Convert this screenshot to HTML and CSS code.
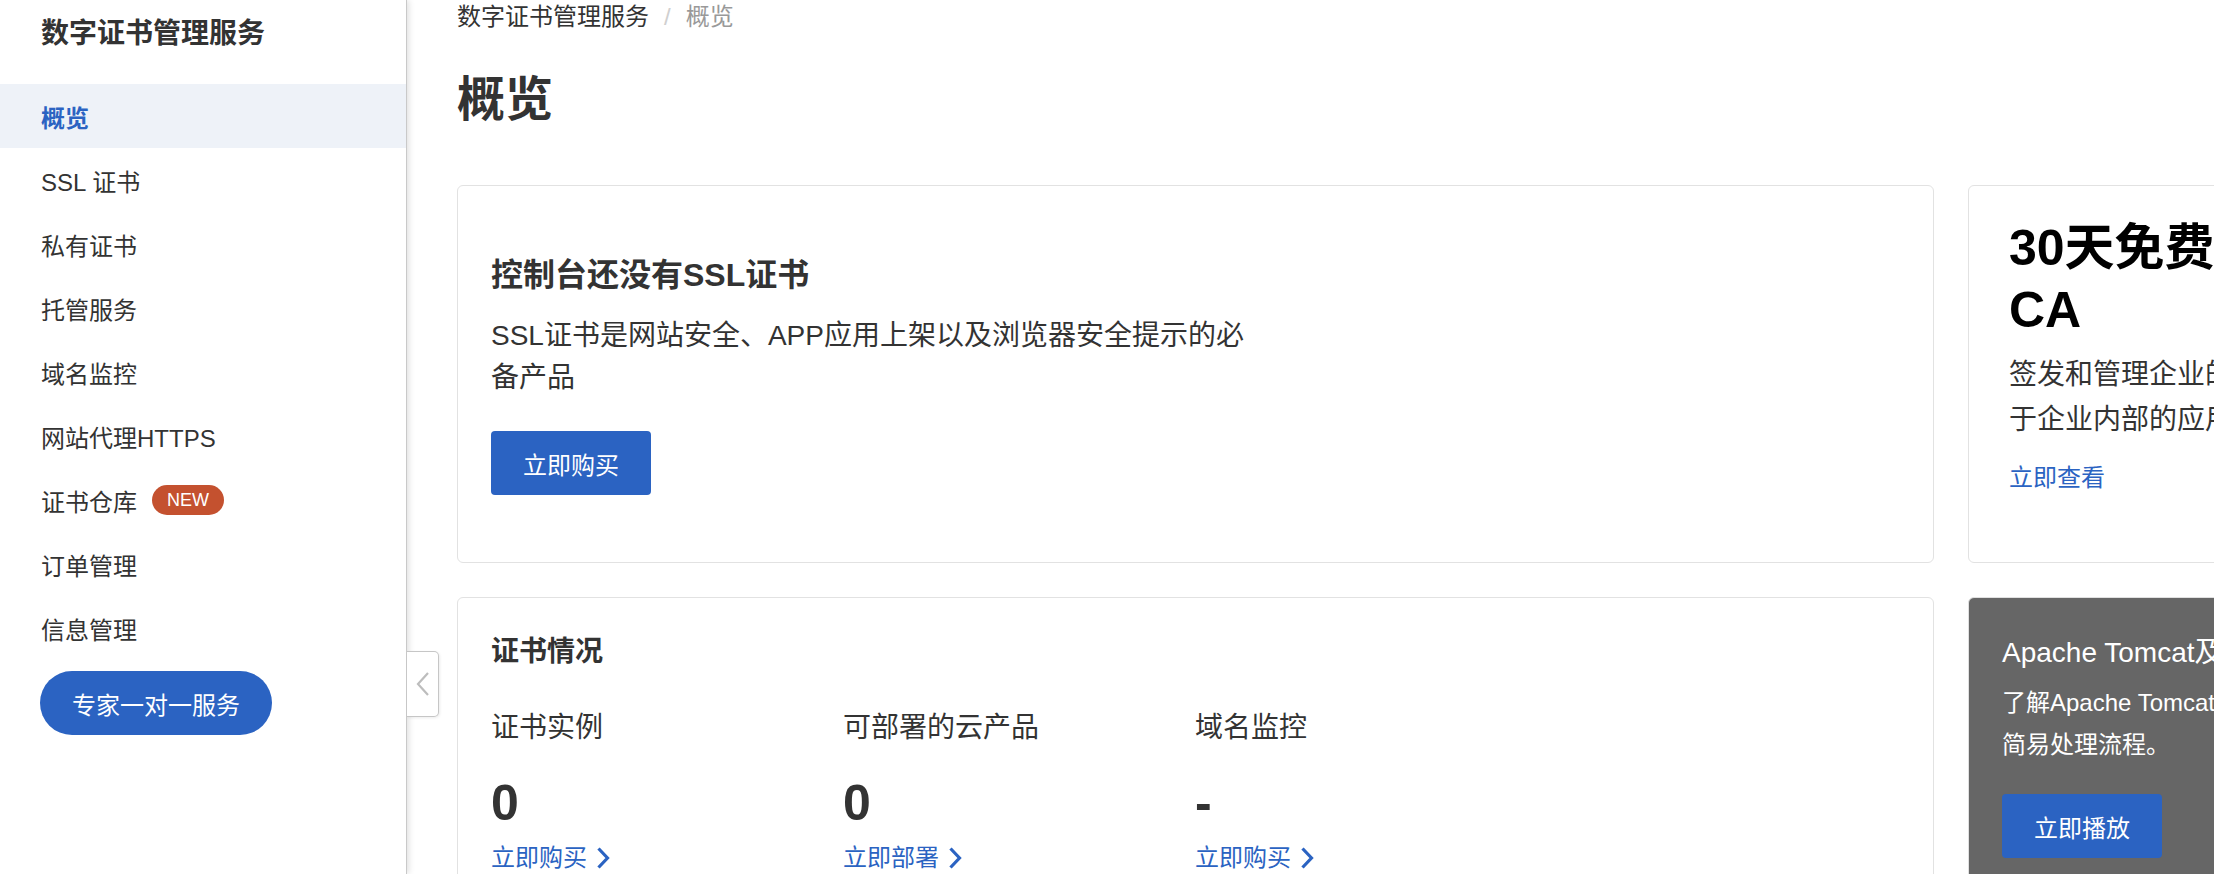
FILE: index.html
```html
<!DOCTYPE html>
<html lang="zh-CN">
<head>
<meta charset="utf-8">
<title>数字证书管理服务 - 概览</title>
<link rel="stylesheet" href="styles.css">
</head>
<body>
<div class="app">
  <aside class="sidebar">
    <div class="sidebar-title">数字证书管理服务</div>
    <nav class="menu">
      <div class="menu-item active">概览</div>
      <div class="menu-item">SSL 证书</div>
      <div class="menu-item">私有证书</div>
      <div class="menu-item">托管服务</div>
      <div class="menu-item">域名监控</div>
      <div class="menu-item">网站代理HTTPS</div>
      <div class="menu-item">证书仓库<span class="badge">NEW</span></div>
      <div class="menu-item">订单管理</div>
      <div class="menu-item">信息管理</div>
    </nav>
    <button class="expert-btn">专家一对一服务</button>
    <div class="collapse-handle">
      <svg width="14" height="26" viewBox="0 0 14 26"><path d="M12 2 L2 13 L12 24" fill="none" stroke="#bdbdbd" stroke-width="2.2"/></svg>
    </div>
  </aside>
  <main class="main">
    <div class="breadcrumb"><span class="crumb">数字证书管理服务</span><span class="sep">/</span><span class="crumb-current">概览</span></div>
    <h1 class="page-title">概览</h1>
    <div class="grid">
      <section class="card card-empty">
        <div class="empty-title">控制台还没有SSL证书</div>
        <div class="empty-desc">SSL证书是网站安全、APP应用上架以及浏览器安全提示的必<br>备产品</div>
        <button class="primary-btn">立即购买</button>
      </section>
      <section class="card card-promo">
        <div class="promo-title">30天免费试用私有<br>CA</div>
        <div class="promo-desc">签发和管理企业的私有证书，适用<br>于企业内部的应用场景</div>
        <a class="promo-link">立即查看</a>
      </section>
      <section class="card card-stats">
        <div class="stats-title">证书情况</div>
        <div class="stats">
          <div class="stat">
            <div class="stat-label">证书实例</div>
            <div class="stat-value">0</div>
            <a class="stat-link">立即购买<svg class="chev" width="14" height="22" viewBox="0 0 14 22"><path d="M2.5 1.5 L11.5 11 L2.5 20.5" fill="none" stroke="#2b63c2" stroke-width="3.2"/></svg></a>
          </div>
          <div class="stat">
            <div class="stat-label">可部署的云产品</div>
            <div class="stat-value">0</div>
            <a class="stat-link">立即部署<svg class="chev" width="14" height="22" viewBox="0 0 14 22"><path d="M2.5 1.5 L11.5 11 L2.5 20.5" fill="none" stroke="#2b63c2" stroke-width="3.2"/></svg></a>
          </div>
          <div class="stat">
            <div class="stat-label">域名监控</div>
            <div class="stat-value">-</div>
            <a class="stat-link">立即购买<svg class="chev" width="14" height="22" viewBox="0 0 14 22"><path d="M2.5 1.5 L11.5 11 L2.5 20.5" fill="none" stroke="#2b63c2" stroke-width="3.2"/></svg></a>
          </div>
        </div>
      </section>
      <section class="card card-video">
        <div class="video-title">Apache Tomcat及Nginx服务器SSL证书部署</div>
        <div class="video-desc">了解Apache Tomcat服务器SSL证书安装的<br>简易处理流程。</div>
        <button class="primary-btn video-btn">立即播放</button>
      </section>
    </div>
  </main>
</div>
</body>
</html>
```

FILE: styles.css
```css
html, body {
  margin: 0;
  padding: 0;
  height: 874px;
  overflow: hidden;
  background: #fff;
}
body {
  font-family: "Liberation Sans", "Noto Sans CJK SC", sans-serif;
  color: #333;
}
.app {
  display: flex;
  height: 874px;
  width: 2214px;
  overflow: hidden;
}
.sidebar {
  flex: none;
  width: 406px;
  border-right: 1px solid #c9c9c9;
  box-shadow: 2px 0 6px rgba(0, 0, 0, 0.12);
  position: relative;
  z-index: 2;
  background: #fff;
}
.sidebar-title {
  padding-left: 41px;
  height: 68px;
  line-height: 68px;
  font-size: 28px;
  font-weight: 700;
  color: #333;
  margin-bottom: 16px;
}
.menu-item {
  display: flex;
  align-items: center;
  height: 64px;
  padding-left: 41px;
  font-size: 24px;
  color: #333;
}
.menu-item.active {
  background: #eef2f8;
  color: #2b63c2;
  font-weight: 600;
}
.badge {
  display: inline-block;
  margin-left: 15px;
  width: 72px;
  height: 30px;
  line-height: 30px;
  border-radius: 15px;
  background: #c4512f;
  color: #fff;
  font-size: 18px;
  font-weight: 400;
  text-align: center;
}
.expert-btn {
  display: block;
  margin: 11px 0 0 40px;
  width: 232px;
  height: 64px;
  border: none;
  border-radius: 32px;
  background: #2b63c2;
  color: #fff;
  font-family: inherit;
  font-size: 24px;
  padding: 0;
}
.collapse-handle {
  position: absolute;
  left: 100%;
  top: 651px;
  width: 31px;
  height: 64px;
  margin-left: 1px;
  border: 1px solid #c6c6c6;
  border-left: none;
  border-radius: 0 5px 5px 0;
  background: #fff;
  box-shadow: 1px 1px 3px rgba(0, 0, 0, 0.08);
  display: flex;
  align-items: center;
  justify-content: center;
}
.main {
  flex: none;
  padding-left: 50px;
}
.breadcrumb {
  height: 34px;
  line-height: 34px;
  font-size: 24px;
  white-space: nowrap;
}
.crumb { color: #333; }
.sep { color: #d0d0d0; margin: 0 15px; }
.crumb-current { color: #999; }
.page-title {
  margin: 34px 0 53px;
  height: 64px;
  line-height: 64px;
  font-size: 48px;
  font-weight: 700;
  color: #333;
}
.grid {
  display: grid;
  grid-template-columns: 1477px 500px;
  grid-template-rows: 378px auto;
  gap: 34px;
}
.card {
  box-sizing: border-box;
  border: 1px solid #e2e2e2;
  border-radius: 6px;
  background: #fff;
  overflow: hidden;
}
.card-empty {
  display: flex;
  flex-direction: column;
  justify-content: center;
  align-items: flex-start;
  padding: 0 33px;
}
.empty-title {
  font-size: 32px;
  font-weight: 700;
  line-height: 44px;
  color: #333;
}
.empty-desc {
  margin-top: 18px;
  font-size: 28px;
  line-height: 42px;
  color: #333;
  white-space: nowrap;
}
.primary-btn {
  margin-top: 32px;
  width: 160px;
  height: 64px;
  border: none;
  border-radius: 4px;
  background: #2b63c2;
  color: #fff;
  font-family: inherit;
  font-size: 24px;
  padding: 0;
}
.card-promo {
  padding: 31px 40px;
}
.promo-title {
  font-size: 50px;
  font-weight: 700;
  line-height: 62px;
  color: #000;
  white-space: nowrap;
}
.promo-desc {
  margin-top: 11px;
  font-size: 28px;
  line-height: 45px;
  color: #333;
  white-space: nowrap;
}
.promo-link {
  display: block;
  margin-top: 18px;
  font-size: 24px;
  line-height: 36px;
  color: #2b63c2;
}
.card-stats {
  padding: 34px 33px;
  height: 400px;
}
.stats-title {
  font-size: 28px;
  font-weight: 600;
  line-height: 40px;
  color: #333;
}
.stats {
  margin-top: 36px;
  display: grid;
  grid-template-columns: repeat(3, 352px);
}
.stat-label {
  font-size: 28px;
  line-height: 40px;
  color: #333;
}
.stat-value {
  margin-top: 27px;
  font-size: 50px;
  font-weight: 700;
  line-height: 56px;
  color: #333;
}
.stat-link {
  display: flex;
  align-items: center;
  margin-top: 10px;
  font-size: 24px;
  line-height: 34px;
  color: #2b63c2;
}
.chev {
  flex: none;
  margin-left: 9px;
}
.card-video {
  background: #666;
  border-color: #e0e0e0;
  padding: 35px 33px;
  color: #fff;
  height: 400px;
}
.video-title {
  font-size: 28px;
  line-height: 40px;
  white-space: nowrap;
}
.video-desc {
  margin-top: 9px;
  font-size: 24px;
  line-height: 42px;
  white-space: nowrap;
}
.video-btn {
  margin-top: 28px;
}
```
